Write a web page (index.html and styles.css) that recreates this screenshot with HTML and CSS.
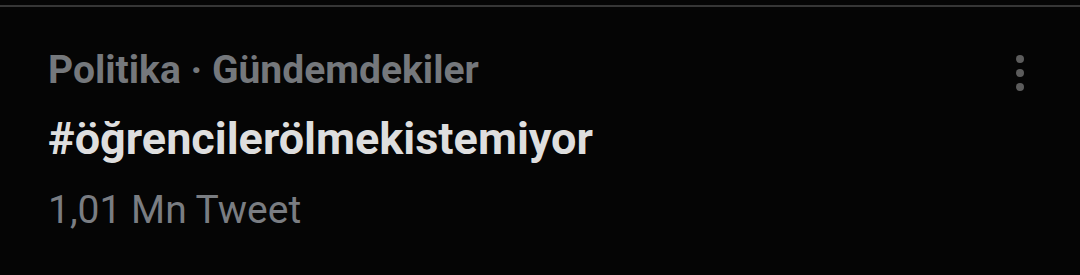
FILE: index.html
```html
<!DOCTYPE html>
<html lang="tr">
<head>
<meta charset="utf-8">
<link rel="stylesheet" href="styles.css">
</head>
<body>
<div class="page">
  <div class="divider"></div>
  <div class="trend">
    <div class="info">
      <div class="context">Politika · Gündemdekiler</div>
      <div class="tag">#öğrencilerölmekistemiyor</div>
      <div class="count">1,01 Mn Tweet</div>
    </div>
    <div class="more" aria-label="Daha fazla">
      <span class="dot"></span><span class="dot"></span><span class="dot"></span>
    </div>
  </div>
</div>
</body>
</html>
```

FILE: styles.css
```css
html, body {
  margin: 0;
  padding: 0;
  background: #050505;
}
body {
  width: 1080px;
  height: 275px;
  overflow: hidden;
  font-family: Roboto, "Liberation Sans", Arial, sans-serif;
}
.page {
  padding-top: 5px;
}
.divider {
  height: 2px;
  background: #363636;
}
.trend {
  display: flex;
  justify-content: space-between;
  padding: 40px 56px 0 48px;
}
.info {
  display: flex;
  flex-direction: column;
}
.context {
  font-size: 39px;
  font-weight: 700;
  color: #75787c;
  line-height: 46px;
}
.tag {
  font-size: 45px;
  font-weight: 700;
  color: #dedede;
  line-height: 52px;
  margin-top: 20px;
}
.count {
  font-size: 39px;
  font-weight: 400;
  color: #7a7d82;
  line-height: 46px;
  margin-top: 22px;
}
.more {
  display: flex;
  flex-direction: column;
  gap: 6px;
  padding-top: 8px;
}
.dot {
  width: 8px;
  height: 8px;
  border-radius: 50%;
  background: #5c5c5c;
}
```
